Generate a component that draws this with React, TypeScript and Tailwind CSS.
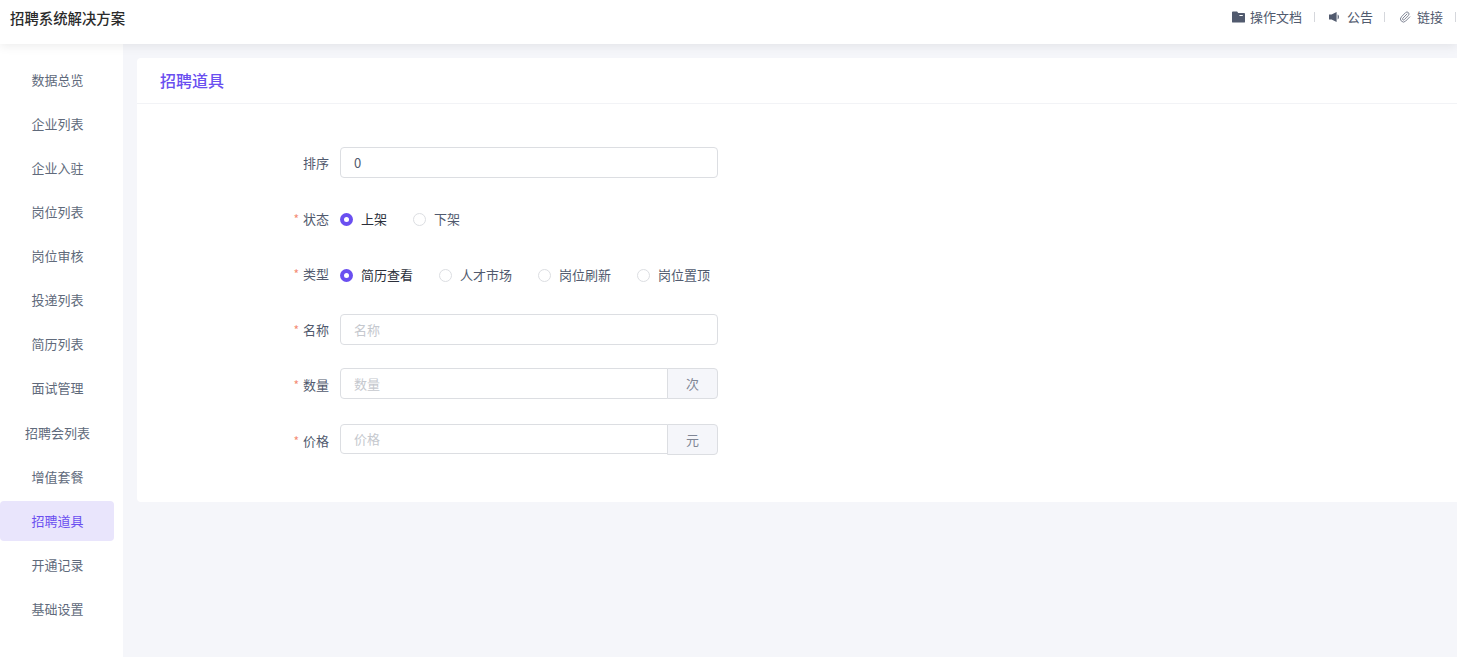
import type { ReactNode } from 'react';
import { Paperclip } from 'lucide-react';

const menu = [
  '数据总览',
  '企业列表',
  '企业入驻',
  '岗位列表',
  '岗位审核',
  '投递列表',
  '简历列表',
  '面试管理',
  '招聘会列表',
  '增值套餐',
  '招聘道具',
  '开通记录',
  '基础设置',
];

function FolderIcon() {
  return (
    <svg width="13" height="12" viewBox="0 0 14 12" className="shrink-0">
      <path
        fill="#515a6e"
        fillRule="evenodd"
        d="M1 0h4.500l1.200 1.600H13a1 1 0 0 1 1 1V11a1 1 0 0 1-1 1H1a1 1 0 0 1-1-1V1a1 1 0 0 1 1-1zM8 3.800v1.200h3.600V3.800z"
      />
    </svg>
  );
}

function SpeakerIcon() {
  return (
    <svg width="12" height="12" viewBox="0 0 12 12" className="shrink-0">
      <path fill="#515a6e" d="M0 3.600h2.600L7.600 1v10L2.600 8.400H0z" />
      <path fill="#515a6e" d="M8.600 3.600c1.700.5 1.700 4.300 0 4.800z" />
    </svg>
  );
}

function HeaderLink({ icon, label, gap }: { icon: ReactNode; label: string; gap: string }) {
  return (
    <div className={`flex items-center ${gap}`}>
      {icon}
      <span>{label}</span>
    </div>
  );
}

function Label({ text, required = true, shift = '' }: { text: string; required?: boolean; shift?: string }) {
  return (
    <label className={`w-[203px] pr-[11px] shrink-0 flex justify-end items-center text-[#515a6e] ${shift}`}>
      {required && <span className="text-[#ed4014] opacity-60 mr-[4px] text-[12px] leading-none">*</span>}
      {text}
    </label>
  );
}

function Radio({ label, checked = false }: { label: string; checked?: boolean }) {
  return (
    <div className="flex items-center gap-2 mr-[26px]">
      {checked ? (
        <span className="w-[13px] h-[13px] rounded-full bg-[#6a4ff0] flex items-center justify-center">
          <span className="w-[5px] h-[5px] rounded-full bg-white" />
        </span>
      ) : (
        <span className="w-[13px] h-[13px] rounded-full border border-[#dcdee2] bg-white" />
      )}
      <span className={checked ? 'text-[#2b2f3a]' : 'text-[#515a6e]'}>{label}</span>
    </div>
  );
}

function TextInput({ placeholder, value }: { placeholder?: string; value?: string }) {
  return (
    <div className="w-[378px] h-[31px] border border-[#dcdee2] rounded-[4px] px-[13px] flex items-center bg-white">
      {value ? (
        <span className="text-[#515a6e]">{value}</span>
      ) : (
        <span className="text-[#c5c8ce]">{placeholder}</span>
      )}
    </div>
  );
}

function AddonInput({ placeholder, unit, inputHeight }: { placeholder: string; unit: string; inputHeight: string }) {
  return (
    <div className="w-[378px] h-[31px] flex items-start">
      <div className={`flex-1 ${inputHeight} border border-[#dcdee2] rounded-l-[4px] px-[13px] flex items-center bg-white text-[#c5c8ce]`}>
        {placeholder}
      </div>
      <div className="w-[51px] h-[31px] -ml-px border border-[#dcdee2] rounded-r-[4px] bg-[#f5f6fa] flex items-center justify-center text-[#808695]">
        {unit}
      </div>
    </div>
  );
}

export default function App() {
  return (
    <div
      className="w-[1457px] h-[657px] overflow-hidden flex flex-col bg-[#f5f6fa] text-[13px]"
      style={{ fontFamily: '"Noto Sans CJK SC", "Noto Sans", sans-serif' }}
    >
      <header className="h-[44px] shrink-0 bg-white shadow-[0_2px_10px_rgba(0,0,0,0.08)] relative z-10 flex items-start justify-between pl-[10px]">
        <div className="mt-[8px] leading-[20px] text-[14.4px] font-medium text-[#2b2b2b]">招聘系统解决方案</div>
        <div className="mt-[7px] h-[20px] flex items-center text-[#515a6e] mr-[1px]">
          <HeaderLink icon={<FolderIcon />} label="操作文档" gap="gap-[5px]" />
          <div className="w-px h-[10px] bg-[#d5d7dc] ml-[12px] mr-[14px]" />
          <HeaderLink icon={<SpeakerIcon />} label="公告" gap="gap-[6px]" />
          <div className="w-px h-[10px] bg-[#d5d7dc] ml-[11px] mr-[14px]" />
          <HeaderLink icon={<Paperclip size={12} strokeWidth={2} color="#808695" />} label="链接" gap="gap-[6px]" />
          <div className="w-px h-[10px] bg-[#d5d7dc] ml-[12px]" />
        </div>
      </header>

      <div className="flex-1 flex min-h-0">
        <aside className="w-[123px] shrink-0 bg-white pt-[16px]">
          {menu.map((item) => (
            <div
              key={item}
              className={
                item === '招聘道具'
                  ? 'w-[114px] h-[40px] mb-[4.1px] pb-[1px] pl-[1px] rounded-[4px] flex items-center justify-center bg-[#e9e5fc] text-[#6a4ff0]'
                  : 'w-[114px] h-[40px] mb-[4.1px] pb-[1px] pl-[1px] flex items-center justify-center text-[#606a7b]'
              }
            >
              {item}
            </div>
          ))}
        </aside>

        <main className="flex-1 pl-[14px] pt-[14px] min-w-0">
          <div className="bg-white rounded-l-[4px] h-[444px]">
            <div className="h-[46px] pb-[2px] border-b border-[#f2f3f6] pl-[23px] flex items-center text-[16px] font-medium text-[#6a4ff0]">
              招聘道具
            </div>
            <div className="pt-[43px] flex flex-col">
              <div className="flex items-center h-[31px]">
                <Label text="排序" required={false} />
                <TextInput value="0" />
              </div>
              <div className="flex items-center h-[20px] mt-[31px]">
                <Label text="状态" />
                <Radio label="上架" checked />
                <Radio label="下架" />
              </div>
              <div className="flex items-center h-[20px] mt-[36px]">
                <Label text="类型" shift="pb-[2px]" />
                <Radio label="简历查看" checked />
                <Radio label="人才市场" />
                <Radio label="岗位刷新" />
                <Radio label="岗位置顶" />
              </div>
              <div className="flex items-center h-[31px] mt-[29px]">
                <Label text="名称" />
                <TextInput placeholder="名称" />
              </div>
              <div className="flex items-center h-[31px] mt-[23px]">
                <Label text="数量" shift="pt-[3px]" />
                <AddonInput placeholder="数量" unit="次" inputHeight="h-[31px]" />
              </div>
              <div className="flex items-center h-[31px] mt-[25px]">
                <Label text="价格" shift="pt-[3px]" />
                <AddonInput placeholder="价格" unit="元" inputHeight="h-[30px]" />
              </div>
            </div>
          </div>
        </main>
      </div>
    </div>
  );
}
